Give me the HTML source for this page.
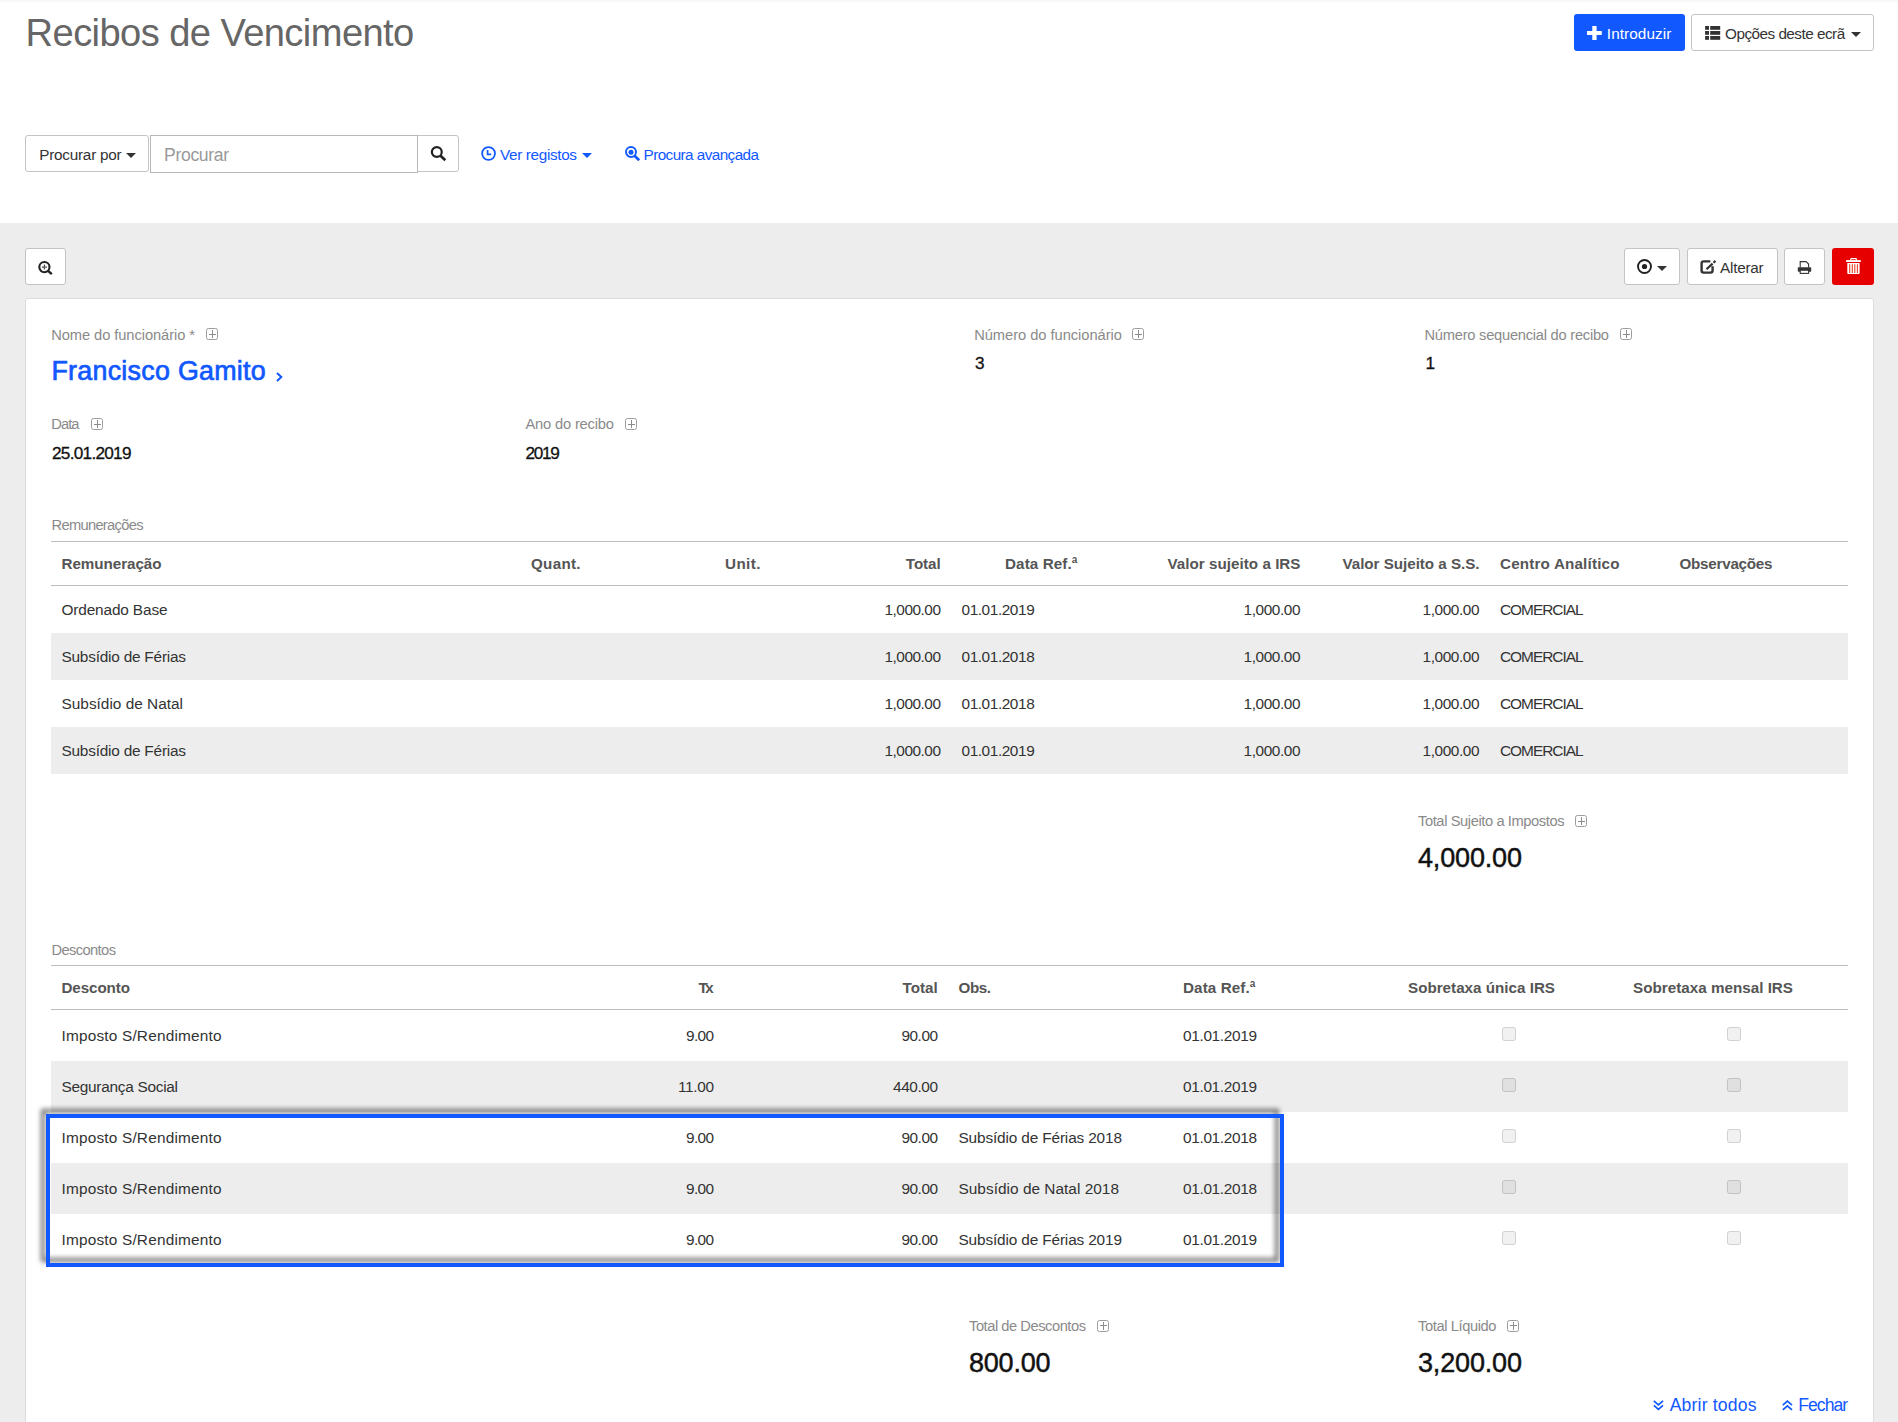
<!DOCTYPE html>
<html lang="pt"><head><meta charset="utf-8"><title>Recibos de Vencimento</title>
<style>
html,body{margin:0;padding:0;}
body{width:1898px;height:1422px;position:relative;overflow:hidden;background:#fff;font-family:'Liberation Sans',sans-serif;}
.t{position:absolute;white-space:pre;line-height:1;margin:0;padding:0;font-weight:400;text-decoration:none;display:block;}
.wsb{-webkit-text-stroke:0.7px #1158ff;}
.wsb3{-webkit-text-stroke:0.3px #111;}
.wsb2{-webkit-text-stroke:0.45px #111;}
.a{position:absolute;box-sizing:border-box;}
.btn{position:absolute;box-sizing:border-box;background:#fff;border:1px solid #c4c4c4;border-radius:3px;margin:0;padding:0;}
.zb{position:absolute;left:51px;width:1797px;background:#ededed;}
.hl{position:absolute;left:51px;width:1797px;height:1px;background:#bdbdbd;}
.cb{-webkit-appearance:none;appearance:none;margin:0;position:absolute;box-sizing:border-box;width:14px;height:14px;border:1px solid rgba(0,0,0,.13);border-radius:3px;background:rgba(0,0,0,.055);}
.ex{position:absolute;box-sizing:border-box;width:12px;height:12px;border:1px solid #9c9c9c;border-radius:2.5px;}
.ex:before{content:"";position:absolute;left:1.5px;top:4.5px;width:7.5px;height:1px;background:#8c8c8c;}
.ex:after{content:"";position:absolute;left:4.5px;top:1px;width:1px;height:8px;background:#8c8c8c;}
.caret{position:absolute;width:0;height:0;border-left:5px solid transparent;border-right:5px solid transparent;border-top:5px solid #333;}
svg{position:absolute;overflow:visible;}

</style></head>
<body>
<!-- page backgrounds -->
<div class="a" style="left:0;top:223px;width:1898px;height:1200px;background:#ededed"></div>
<div class="a" style="left:0;top:0;width:1898px;height:3px;background:linear-gradient(#f6f6f6,#fff)"></div>

<!-- top buttons -->
<button type="button" class="btn" style="left:1574px;top:14px;width:111px;height:37px;background:#1158ff;border:0"></button>
<svg style="left:1587.300px;top:26px" width="15" height="14" viewBox="0 0 15 14"><path d="M5.300 0h4.300v4.900h5.200v4.200H9.600V14H5.300V9.100H0V4.900h5.300z" fill="#fff"/></svg>
<button type="button" class="btn" style="left:1691px;top:14px;width:183px;height:37px"></button>
<svg style="left:1705px;top:26px" width="16" height="14" viewBox="0 0 16 14"><g fill="#333"><rect x="0.100" y="0" width="3.900" height="3.800"/><rect x="5.200" y="0" width="10" height="3.800"/><rect x="0.100" y="5" width="3.900" height="3.800"/><rect x="5.200" y="5" width="10" height="3.800"/><rect x="0.100" y="10" width="3.900" height="3.800"/><rect x="5.200" y="10" width="10" height="3.800"/></g></svg>
<div class="caret" style="left:1850.500px;top:32px"></div>

<!-- search row -->
<button type="button" class="btn" style="left:25px;top:135px;width:124px;height:37px"></button>
<div class="caret" style="left:126px;top:153px"></div>
<button type="button" class="btn" style="left:417px;top:135px;width:42px;height:37px;border-radius:0 3px 3px 0"></button>
<div class="a" style="left:150px;top:135px;width:268px;height:38px;background:#fff;border:1px solid #b8b8b8;border-radius:0"></div>
<svg style="left:431px;top:146px" width="16" height="16" viewBox="0 0 16 16"><circle cx="5.800" cy="6" r="4.950" fill="none" stroke="#222" stroke-width="2.200"/><path d="M9.600 9.800l4.700 4.500" stroke="#222" stroke-width="2.700"/></svg>
<!-- ver registos -->
<svg style="left:481px;top:146px" width="15" height="15" viewBox="0 0 15 15"><circle cx="7.550" cy="7.500" r="6.400" fill="none" stroke="#1158ff" stroke-width="1.800"/><path d="M6.600 3.900V8.300H10.200" fill="none" stroke="#1158ff" stroke-width="1.700"/></svg>
<div class="caret" style="left:581.500px;top:153px;border-top-color:#1158ff"></div>
<!-- procura avancada -->
<svg style="left:624px;top:146px" width="17" height="16" viewBox="0 0 17 16"><circle cx="7" cy="6" r="5" fill="none" stroke="#1158ff" stroke-width="1.900"/><circle cx="7" cy="6.200" r="2.500" fill="#1158ff"/><path d="M10.500 9.700l4.700 4.500" stroke="#1158ff" stroke-width="2.700"/></svg>

<!-- toolbar -->
<button type="button" class="btn" style="left:25px;top:248px;width:41px;height:37px"></button>
<svg style="left:38.100px;top:261px" width="16" height="15" viewBox="0 0 16 15"><circle cx="6.400" cy="6.100" r="5.100" fill="none" stroke="#222" stroke-width="2.100"/><path d="M10.100 9.800l3.700 3.400" stroke="#222" stroke-width="2.400"/><path d="M6.400 3.600v5M3.900 6.100h5" stroke="#555" stroke-width="1.300"/></svg>

<button type="button" class="btn" style="left:1624px;top:248px;width:56px;height:37px"></button>
<svg style="left:1637px;top:259px" width="15" height="15" viewBox="0 0 15 15"><circle cx="7.500" cy="7.500" r="6.500" fill="none" stroke="#222" stroke-width="1.900"/><circle cx="7.500" cy="7.500" r="2.600" fill="#222"/></svg>
<div class="caret" style="left:1657px;top:266px"></div>
<button type="button" class="btn" style="left:1687px;top:248px;width:91px;height:37px"></button>
<svg style="left:1700px;top:260px" width="17" height="14" viewBox="0 0 17 14"><path d="M10.300 1.400H3.600Q1.600 1.400 1.600 3.400V10.600Q1.600 12.600 3.600 12.600H10.600Q12.600 12.600 12.600 10.600V6.200" fill="none" stroke="#333" stroke-width="2.400"/><path d="M6.500 9.300L12.600 3.600" stroke="#333" stroke-width="2.200"/><path d="M13.500 2.700L15.400 0.900" stroke="#333" stroke-width="2.200"/></svg>
<button type="button" class="btn" style="left:1784px;top:248px;width:41px;height:37px"></button>
<svg style="left:1797px;top:261px" width="15" height="13" viewBox="0 0 15 13"><path d="M3.200 6.500V0.600H9L11.600 3V6.500" fill="#fff" stroke="#333" stroke-width="1.100"/><rect x="0.800" y="6.200" width="13.400" height="4.600" rx="0.800" fill="#333"/><rect x="3.200" y="9.200" width="8.400" height="3.200" fill="#fff" stroke="#333" stroke-width="1.100"/></svg>
<button type="button" class="btn" style="left:1832px;top:248px;width:42px;height:37px;background:#e60000;border:0"></button>
<svg style="left:1846px;top:258px" width="15" height="16" viewBox="0 0 15 16"><path d="M4.700 2.500V1.500Q4.700 0.700 5.500 0.700H9.600Q10.400 0.700 10.400 1.500V2.500" fill="none" stroke="#fff" stroke-width="1.300"/><rect x="0.100" y="2.100" width="14.700" height="1.900" fill="#fff"/><path d="M1.300 5h12.300V15.200q0 0.800-0.800 0.800H2.100q-0.800 0-0.800-0.800z" fill="#fff"/><path d="M3.700 6.300v8.600M6.300 6.300v8.600M8.800 6.300v8.600M11.400 6.300v8.600" stroke="#e8402a" stroke-width="1.100"/></svg>

<!-- card -->
<div class="a" style="left:25px;top:298px;width:1849px;height:1140px;background:#fff;border:1px solid #dcdcdc;border-radius:3px"></div>

<!-- expand icons -->
<div class="ex" style="left:206px;top:328px"></div>
<div class="ex" style="left:1132px;top:328px"></div>
<div class="ex" style="left:1620px;top:328px"></div>
<div class="ex" style="left:91px;top:418px"></div>
<div class="ex" style="left:625px;top:418px"></div>
<div class="ex" style="left:1575px;top:815px"></div>
<div class="ex" style="left:1097px;top:1319.500px"></div>
<div class="ex" style="left:1507px;top:1319.500px"></div>
<!-- name chevron -->
<svg style="left:275.500px;top:371.500px" width="7" height="10" viewBox="0 0 7 10"><path d="M1 1l4.300 4L1 9" fill="none" stroke="#1158ff" stroke-width="2"/></svg>

<!-- table 1 -->
<div class="hl" style="top:541px"></div>
<div class="hl" style="top:585px"></div>
<div class="zb" style="top:633px;height:47px"></div>
<div class="zb" style="top:727px;height:47px"></div>

<!-- table 2 -->
<div class="hl" style="top:965px"></div>
<div class="hl" style="top:1009px"></div>
<div class="zb" style="top:1061px;height:51px"></div>
<div class="zb" style="top:1163px;height:51px"></div>
<input type="checkbox" disabled class="cb" style="left:1502px;top:1027px"><input type="checkbox" disabled class="cb" style="left:1727px;top:1027px">
<input type="checkbox" disabled class="cb" style="left:1502px;top:1078px"><input type="checkbox" disabled class="cb" style="left:1727px;top:1078px">
<input type="checkbox" disabled class="cb" style="left:1502px;top:1129px"><input type="checkbox" disabled class="cb" style="left:1727px;top:1129px">
<input type="checkbox" disabled class="cb" style="left:1502px;top:1180px"><input type="checkbox" disabled class="cb" style="left:1727px;top:1180px">
<input type="checkbox" disabled class="cb" style="left:1502px;top:1231px"><input type="checkbox" disabled class="cb" style="left:1727px;top:1231px">

<!-- highlight frame with offset shadow -->
<div class="a" style="left:46px;top:1114px;width:1238px;height:153px;border:4px solid #1158ff;filter:drop-shadow(-5px -5px 2.500px rgba(0,0,0,.55))"></div>

<!-- bottom links icons -->
<svg style="left:1653.300px;top:1400px" width="11" height="11" viewBox="0 0 11 11"><path d="M0.800 0.800l4.600 4L10 0.800M0.800 5.400l4.600 4L10 5.400" fill="none" stroke="#1158ff" stroke-width="1.700"/></svg>
<svg style="left:1781.500px;top:1400px" width="11" height="11" viewBox="0 0 11 11"><path d="M0.800 5.200L5.400 1.200 10 5.200M0.800 9.800L5.400 5.800 10 9.800" fill="none" stroke="#1158ff" stroke-width="1.700"/></svg>

<h1 class="t" style="left:25.6px;top:14.25px;font-size:38.1px;color:#666;letter-spacing:-0.568px;">Recibos de Vencimento</h1>
<span class="t" style="left:1606.84px;top:26.15px;font-size:15.3px;color:#fff;letter-spacing:0.075px;">Introduzir</span>
<span class="t" style="left:1725px;top:26.15px;font-size:15.3px;color:#333;letter-spacing:-0.513px;">Opções deste ecrã</span>
<span class="t" style="left:39.3px;top:147.05px;font-size:15.3px;color:#333;letter-spacing:-0.247px;">Procurar por</span>
<span class="t" style="left:164.0px;top:147.0px;font-size:17.6px;color:#999;letter-spacing:-0.33px;">Procurar</span>
<a href="#" class="t" style="left:500px;top:147.05px;font-size:15.3px;color:#1158ff;letter-spacing:-0.344px;">Ver registos</a>
<a href="#" class="t" style="left:643.5px;top:147.05px;font-size:15.3px;color:#1158ff;letter-spacing:-0.577px;">Procura avançada</a>
<span class="t" style="left:1720px;top:260.05px;font-size:15.3px;color:#333;letter-spacing:-0.227px;">Alterar</span>
<label class="t" style="left:51.2px;top:327.56px;font-size:14.7px;color:#8a8a8a;letter-spacing:-0.076px;">Nome do funcionário *</label>
<a href="#" class="t wsb" style="left:51.4px;top:357.79px;font-size:26.8px;color:#1158ff;letter-spacing:0.293px;">Francisco Gamito</a>
<label class="t" style="left:974.2px;top:327.56px;font-size:14.7px;color:#8a8a8a;letter-spacing:-0.045px;">Número do funcionário</label>
<div class="t wsb3" style="left:975px;top:355.44px;font-size:17.2px;color:#111;">3</div>
<label class="t" style="left:1424.5px;top:327.56px;font-size:14.7px;color:#8a8a8a;letter-spacing:-0.252px;">Número sequencial do recibo</label>
<div class="t wsb3" style="left:1425.5px;top:355.44px;font-size:17.2px;color:#111;">1</div>
<label class="t" style="left:51.2px;top:417.26px;font-size:14.7px;color:#8a8a8a;letter-spacing:-0.91px;">Data</label>
<div class="t wsb3" style="left:52px;top:444.94px;font-size:17.2px;color:#111;letter-spacing:-0.726px;">25.01.2019</div>
<label class="t" style="left:525.5px;top:417.26px;font-size:14.7px;color:#8a8a8a;letter-spacing:-0.178px;">Ano do recibo</label>
<div class="t wsb3" style="left:525.5px;top:444.94px;font-size:17.2px;color:#111;letter-spacing:-1.35px;">2019</div>
<label class="t" style="left:51.5px;top:518.06px;font-size:14.7px;color:#8a8a8a;letter-spacing:-0.692px;">Remunerações</label>
<div class="t" style="left:61.5px;top:556.03px;font-size:15.2px;color:#555;font-weight:700;letter-spacing:-0.045px;">Remuneração</div>
<div class="t" style="left:531px;top:556.03px;font-size:15.2px;color:#555;font-weight:700;letter-spacing:0.281px;">Quant.</div>
<div class="t" style="left:725px;top:556.03px;font-size:15.2px;color:#555;font-weight:700;letter-spacing:0.438px;">Unit.</div>
<div class="t" style="left:905.8px;top:556.03px;font-size:15.2px;color:#555;font-weight:700;letter-spacing:-0.064px;">Total</div>
<div class="t" style="left:1005px;top:556.03px;font-size:15.2px;color:#555;font-weight:700;letter-spacing:0.116px;">Data Ref.ª</div>
<div class="t" style="left:1167.5px;top:556.03px;font-size:15.2px;color:#555;font-weight:700;letter-spacing:0.027px;">Valor sujeito a IRS</div>
<div class="t" style="left:1342.5px;top:556.03px;font-size:15.2px;color:#555;font-weight:700;letter-spacing:-0.03px;">Valor Sujeito a S.S.</div>
<div class="t" style="left:1500px;top:556.03px;font-size:15.2px;color:#555;font-weight:700;letter-spacing:0.184px;">Centro Analítico</div>
<div class="t" style="left:1679.5px;top:556.03px;font-size:15.2px;color:#555;font-weight:700;letter-spacing:-0.241px;">Observações</div>
<div class="t" style="left:61.5px;top:601.96px;font-size:15.4px;color:#333;letter-spacing:-0.151px;">Ordenado Base</div>
<div class="t" style="left:884.5px;top:601.96px;font-size:15.4px;color:#333;letter-spacing:-0.489px;">1,000.00</div>
<div class="t" style="left:961.5px;top:601.96px;font-size:15.4px;color:#333;letter-spacing:-0.426px;">01.01.2019</div>
<div class="t" style="left:1243.5px;top:601.96px;font-size:15.4px;color:#333;letter-spacing:-0.417px;">1,000.00</div>
<div class="t" style="left:1422.5px;top:601.96px;font-size:15.4px;color:#333;letter-spacing:-0.417px;">1,000.00</div>
<div class="t" style="left:1500px;top:601.96px;font-size:15.4px;color:#333;letter-spacing:-1.002px;">COMERCIAL</div>
<div class="t" style="left:61.5px;top:648.96px;font-size:15.4px;color:#333;letter-spacing:-0.225px;">Subsídio de Férias</div>
<div class="t" style="left:884.5px;top:648.96px;font-size:15.4px;color:#333;letter-spacing:-0.489px;">1,000.00</div>
<div class="t" style="left:961.5px;top:648.96px;font-size:15.4px;color:#333;letter-spacing:-0.426px;">01.01.2018</div>
<div class="t" style="left:1243.5px;top:648.96px;font-size:15.4px;color:#333;letter-spacing:-0.417px;">1,000.00</div>
<div class="t" style="left:1422.5px;top:648.96px;font-size:15.4px;color:#333;letter-spacing:-0.417px;">1,000.00</div>
<div class="t" style="left:1500px;top:648.96px;font-size:15.4px;color:#333;letter-spacing:-1.002px;">COMERCIAL</div>
<div class="t" style="left:61.5px;top:695.96px;font-size:15.4px;color:#333;">Subsídio de Natal</div>
<div class="t" style="left:884.5px;top:695.96px;font-size:15.4px;color:#333;letter-spacing:-0.489px;">1,000.00</div>
<div class="t" style="left:961.5px;top:695.96px;font-size:15.4px;color:#333;letter-spacing:-0.426px;">01.01.2018</div>
<div class="t" style="left:1243.5px;top:695.96px;font-size:15.4px;color:#333;letter-spacing:-0.417px;">1,000.00</div>
<div class="t" style="left:1422.5px;top:695.96px;font-size:15.4px;color:#333;letter-spacing:-0.417px;">1,000.00</div>
<div class="t" style="left:1500px;top:695.96px;font-size:15.4px;color:#333;letter-spacing:-1.002px;">COMERCIAL</div>
<div class="t" style="left:61.5px;top:742.96px;font-size:15.4px;color:#333;letter-spacing:-0.225px;">Subsídio de Férias</div>
<div class="t" style="left:884.5px;top:742.96px;font-size:15.4px;color:#333;letter-spacing:-0.489px;">1,000.00</div>
<div class="t" style="left:961.5px;top:742.96px;font-size:15.4px;color:#333;letter-spacing:-0.426px;">01.01.2019</div>
<div class="t" style="left:1243.5px;top:742.96px;font-size:15.4px;color:#333;letter-spacing:-0.417px;">1,000.00</div>
<div class="t" style="left:1422.5px;top:742.96px;font-size:15.4px;color:#333;letter-spacing:-0.417px;">1,000.00</div>
<div class="t" style="left:1500px;top:742.96px;font-size:15.4px;color:#333;letter-spacing:-1.002px;">COMERCIAL</div>
<label class="t" style="left:1418px;top:814.46px;font-size:14.7px;color:#8a8a8a;letter-spacing:-0.406px;">Total Sujeito a Impostos</label>
<div class="t wsb2" style="left:1418px;top:845.34px;font-size:27px;color:#111;letter-spacing:-0.158px;">4,000.00</div>
<label class="t" style="left:51.5px;top:942.56px;font-size:14.7px;color:#8a8a8a;letter-spacing:-0.613px;">Descontos</label>
<div class="t" style="left:61.5px;top:980.03px;font-size:15.2px;color:#555;font-weight:700;letter-spacing:-0.1px;">Desconto</div>
<div class="t" style="left:698.6px;top:980.03px;font-size:15.2px;color:#555;font-weight:700;letter-spacing:-2.534px;">Tx</div>
<div class="t" style="left:902.5px;top:980.03px;font-size:15.2px;color:#555;font-weight:700;letter-spacing:0.036px;">Total</div>
<div class="t" style="left:958.5px;top:980.03px;font-size:15.2px;color:#555;font-weight:700;letter-spacing:-0.422px;">Obs.</div>
<div class="t" style="left:1183px;top:980.03px;font-size:15.2px;color:#555;font-weight:700;letter-spacing:0.116px;">Data Ref.ª</div>
<div class="t" style="left:1408px;top:980.03px;font-size:15.2px;color:#555;font-weight:700;letter-spacing:0.007px;">Sobretaxa única IRS</div>
<div class="t" style="left:1633px;top:980.03px;font-size:15.2px;color:#555;font-weight:700;letter-spacing:0.024px;">Sobretaxa mensal IRS</div>
<div class="t" style="left:61.5px;top:1027.96px;font-size:15.4px;color:#333;letter-spacing:0.181px;">Imposto S/Rendimento</div>
<div class="t" style="left:686px;top:1027.96px;font-size:15.4px;color:#333;letter-spacing:-0.656px;">9.00</div>
<div class="t" style="left:901.5px;top:1027.96px;font-size:15.4px;color:#333;letter-spacing:-0.504px;">90.00</div>
<div class="t" style="left:1183px;top:1027.96px;font-size:15.4px;color:#333;letter-spacing:-0.337px;">01.01.2019</div>
<div class="t" style="left:61.5px;top:1078.96px;font-size:15.4px;color:#333;letter-spacing:-0.276px;">Segurança Social</div>
<div class="t" style="left:678px;top:1078.96px;font-size:15.4px;color:#333;letter-spacing:-0.344px;">11.00</div>
<div class="t" style="left:893px;top:1078.96px;font-size:15.4px;color:#333;letter-spacing:-0.416px;">440.00</div>
<div class="t" style="left:1183px;top:1078.96px;font-size:15.4px;color:#333;letter-spacing:-0.337px;">01.01.2019</div>
<div class="t" style="left:61.5px;top:1129.96px;font-size:15.4px;color:#333;letter-spacing:0.181px;">Imposto S/Rendimento</div>
<div class="t" style="left:686px;top:1129.96px;font-size:15.4px;color:#333;letter-spacing:-0.656px;">9.00</div>
<div class="t" style="left:901.5px;top:1129.96px;font-size:15.4px;color:#333;letter-spacing:-0.504px;">90.00</div>
<div class="t" style="left:958.5px;top:1129.96px;font-size:15.4px;color:#333;letter-spacing:-0.152px;">Subsídio de Férias 2018</div>
<div class="t" style="left:1183px;top:1129.96px;font-size:15.4px;color:#333;letter-spacing:-0.337px;">01.01.2018</div>
<div class="t" style="left:61.5px;top:1180.96px;font-size:15.4px;color:#333;letter-spacing:0.181px;">Imposto S/Rendimento</div>
<div class="t" style="left:686px;top:1180.96px;font-size:15.4px;color:#333;letter-spacing:-0.656px;">9.00</div>
<div class="t" style="left:901.5px;top:1180.96px;font-size:15.4px;color:#333;letter-spacing:-0.504px;">90.00</div>
<div class="t" style="left:958.5px;top:1180.96px;font-size:15.4px;color:#333;letter-spacing:0.023px;">Subsídio de Natal 2018</div>
<div class="t" style="left:1183px;top:1180.96px;font-size:15.4px;color:#333;letter-spacing:-0.337px;">01.01.2018</div>
<div class="t" style="left:61.5px;top:1231.96px;font-size:15.4px;color:#333;letter-spacing:0.181px;">Imposto S/Rendimento</div>
<div class="t" style="left:686px;top:1231.96px;font-size:15.4px;color:#333;letter-spacing:-0.656px;">9.00</div>
<div class="t" style="left:901.5px;top:1231.96px;font-size:15.4px;color:#333;letter-spacing:-0.504px;">90.00</div>
<div class="t" style="left:958.5px;top:1231.96px;font-size:15.4px;color:#333;letter-spacing:-0.152px;">Subsídio de Férias 2019</div>
<div class="t" style="left:1183px;top:1231.96px;font-size:15.4px;color:#333;letter-spacing:-0.337px;">01.01.2019</div>
<label class="t" style="left:969px;top:1318.56px;font-size:14.7px;color:#8a8a8a;letter-spacing:-0.466px;">Total de Descontos</label>
<div class="t wsb2" style="left:969px;top:1349.74px;font-size:27px;color:#111;letter-spacing:-0.219px;">800.00</div>
<label class="t" style="left:1418px;top:1318.56px;font-size:14.7px;color:#8a8a8a;letter-spacing:-0.4px;">Total Líquido</label>
<div class="t wsb2" style="left:1418px;top:1349.74px;font-size:27px;color:#111;letter-spacing:-0.158px;">3,200.00</div>
<a href="#" class="t" style="left:1669.7px;top:1396.9px;font-size:17.6px;color:#1158ff;letter-spacing:0.172px;">Abrir todos</a>
<a href="#" class="t" style="left:1798.2px;top:1396.9px;font-size:17.6px;color:#1158ff;letter-spacing:-0.953px;">Fechar</a>
</body></html>
